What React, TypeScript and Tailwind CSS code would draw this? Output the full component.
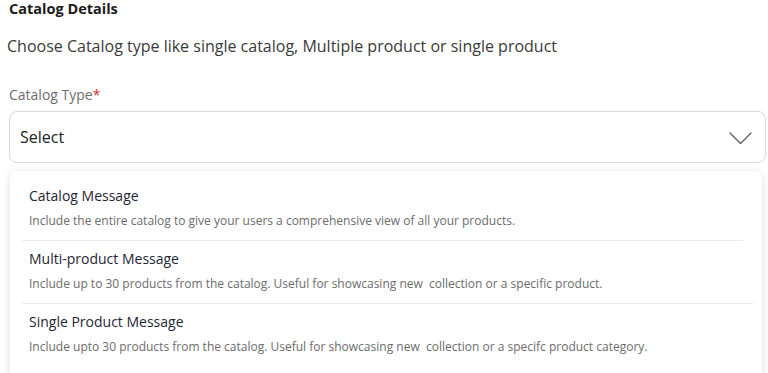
const options = [
  {
    title: "Catalog Message",
    desc: "Include the entire catalog to give your users a comprehensive view of all your products.",
    divider: "mr-[19px]",
  },
  {
    title: "Multi-product Message",
    desc: "Include up to 30 products from the catalog. Useful for showcasing new\u00a0 collection or a specific product.",
    divider: "mr-[9px]",
  },
  {
    title: "Single Product Message",
    desc: "Include upto 30 products from the catalog. Useful for showcasing new\u00a0 collection or a specifc product category.",
    divider: "",
  },
]

export default function App() {
  return (
    <div
      className="h-[373px] w-[768px] overflow-hidden bg-white px-[9px]"
      style={{ fontFamily: '"Open Sans", "Liberation Sans", sans-serif' }}
    >
      <h1 className="-mt-px text-[14.5px] font-bold leading-5 text-[#1c1c1c]">Catalog Details</h1>
      <p className="-ml-0.5 mt-[15px] text-[16px] leading-6 text-[#3a3a3a]">
        Choose Catalog type like single catalog, Multiple product or single product
      </p>

      <label className="mt-[27px] block text-[14px] leading-5 text-[#6e6e6e]">
        Catalog Type<span className="text-[#d0312d]">*</span>
      </label>

      <div className="mr-[-7px] mt-[6px] flex h-[52px] items-center justify-between rounded-lg border border-[#d9d9d9] pl-[10px] pr-[13px]">
        <span className="text-[16px] leading-6 text-[#222]">Select</span>
        <svg width="23" height="13" viewBox="0 0 23 13" fill="none" className="mt-0.5">
          <polyline points="1,1 11.5,11.5 22,1" stroke="#5a5a5a" strokeWidth="1.3" strokeLinecap="round" strokeLinejoin="round" />
        </svg>
      </div>

      <div className="ml-px mr-[-3px] mt-2 rounded-md bg-white pb-8 pt-[7px] shadow-[0_2px_10px_rgba(0,0,0,0.13)]">
        {options.map((o, i) => (
          <div key={o.title}>
            <div className="px-[19px] pb-[11px] pt-2">
              <div className="text-[14px] font-medium leading-5 text-[#1f2633]">{o.title}</div>
              <div className="mt-[7px] text-[12px] leading-4 text-[#6c6c6c]">{o.desc}</div>
            </div>
            {i < options.length - 1 && <div className={`ml-3 h-px bg-[#ececec] ${o.divider}`} />}
          </div>
        ))}
      </div>
    </div>
  )
}
